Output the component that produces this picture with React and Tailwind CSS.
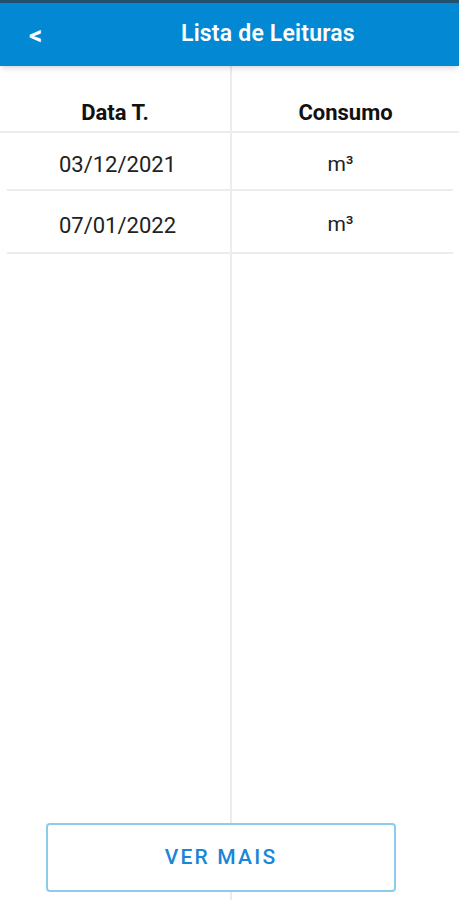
export default function App() {
  const rows = [
    { date: '03/12/2021', value: 'm³', h: 'h-[58px]' },
    { date: '07/01/2022', value: 'm³', h: 'h-[63px]' },
  ];

  return (
    <div className="relative h-[900px] flex flex-col bg-white overflow-hidden" style={{ fontFamily: 'Roboto, "Noto Sans", sans-serif' }}>
      <div className="h-[3px] bg-[#24506f]" />
      <header className="h-[63px] flex items-center bg-[#0389d3] shadow-md z-10 text-white">
        <button className="w-[72px] pl-[29px] text-left text-[26px] font-bold leading-none">&lt;</button>
        <h1 className="flex-1 pl-[109px] text-[23px] font-semibold tracking-[0.2px]">Lista de Leituras</h1>
      </header>

      <div className="flex-1 flex">
        <div className="w-[232px] border-r-2 border-[#ececec] flex flex-col">
          <div className="h-[67px] flex items-end justify-center pb-[7px] border-b-2 border-[#ececec] text-[22px] leading-[22px] font-bold text-[#111]">
            Data T.
          </div>
          {rows.map((r) => (
            <div key={r.date} className={`${r.h} ml-[7px] flex items-center justify-center pt-[7px] pr-[2px] border-b-2 border-[#ececec] text-[22px] text-[#222]`}>
              {r.date}
            </div>
          ))}
        </div>
        <div className="flex-1 flex flex-col">
          <div className="h-[67px] flex items-end justify-center pb-[7px] border-b-2 border-[#ececec] text-[22px] leading-[22px] font-bold text-[#111]">
            Consumo
          </div>
          {rows.map((r) => (
            <div key={r.date} className={`${r.h} mr-[6px] flex items-center justify-center pt-[7px] pr-[4px] border-b-2 border-[#ececec] text-[21px] text-[#222]`}>
              {r.value}
            </div>
          ))}
        </div>
      </div>

      <button className="absolute left-[46px] top-[823px] w-[350px] h-[69px] bg-white border-2 border-[#8ccbe9] rounded-[4px] text-[21px] font-medium tracking-[2.2px] text-[#1b86d6]">
        VER MAIS
      </button>
    </div>
  );
}
